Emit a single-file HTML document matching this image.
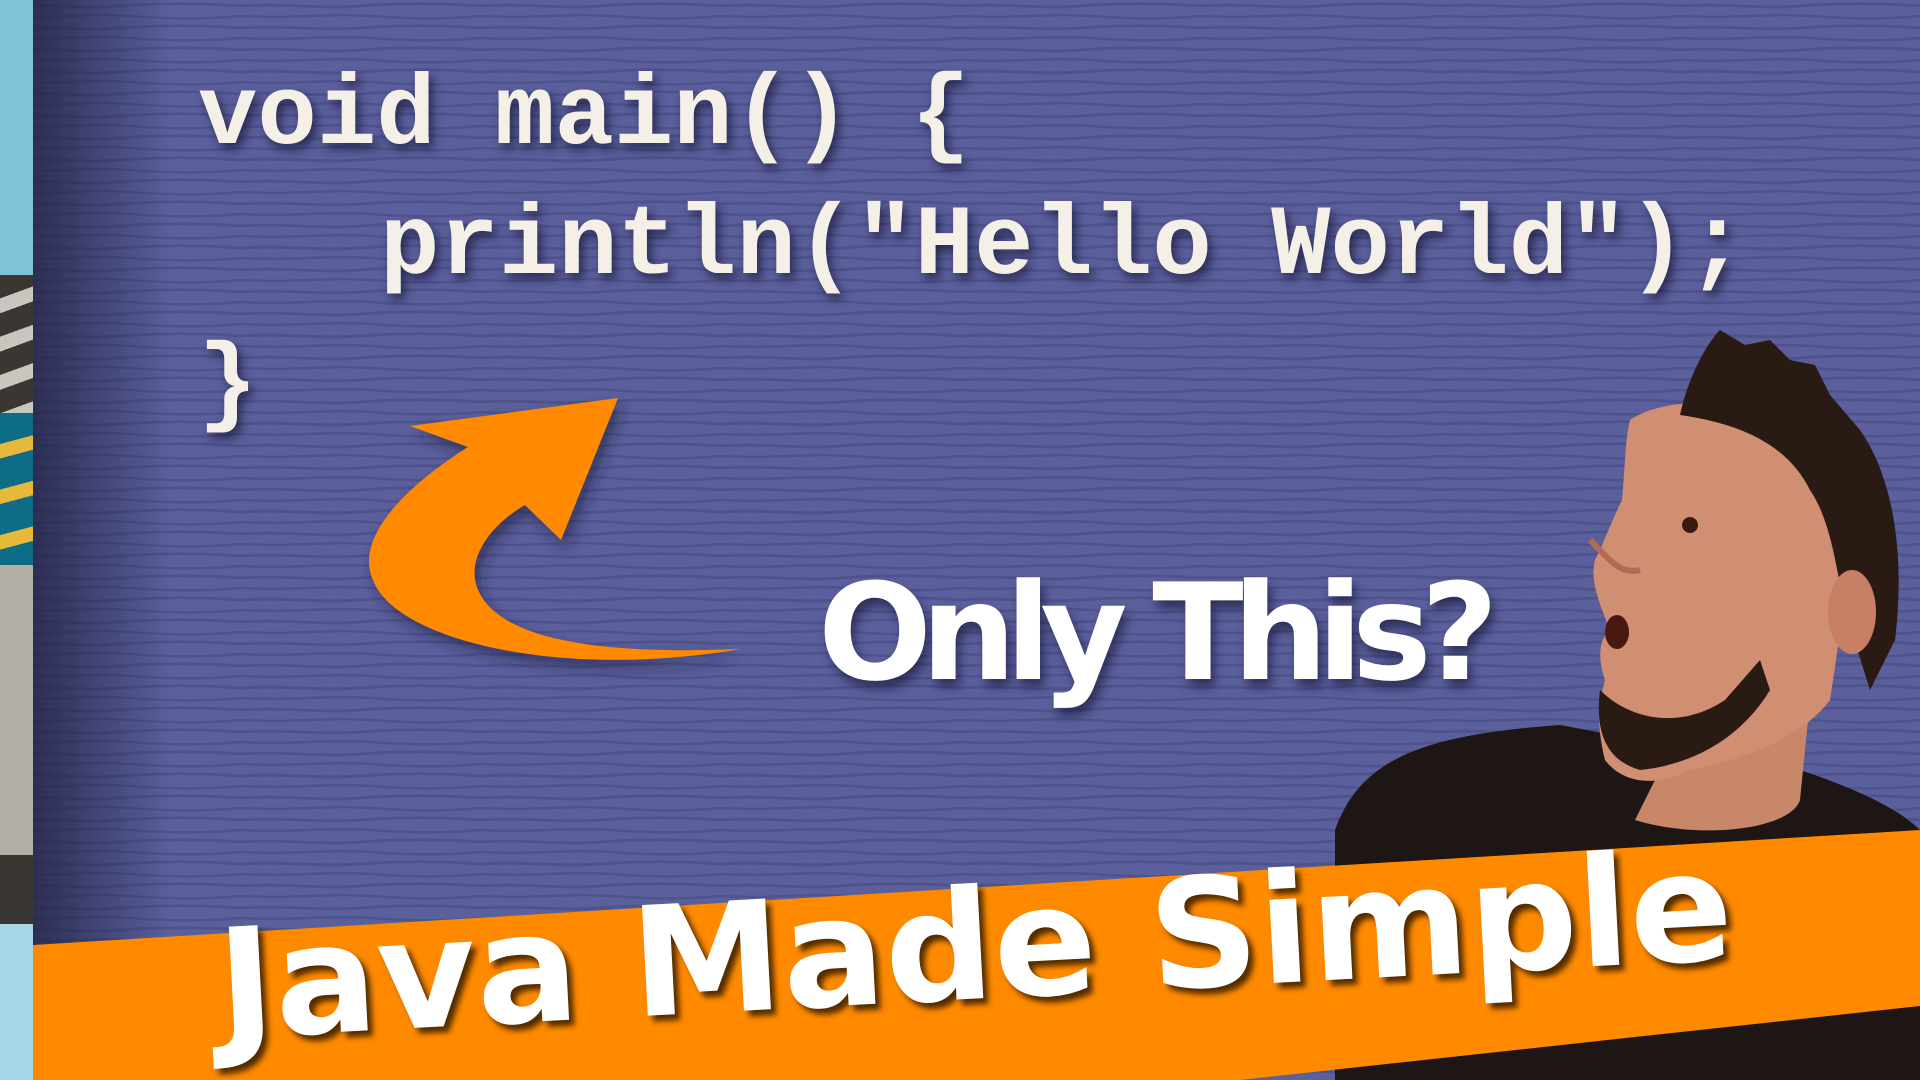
<!DOCTYPE html>
<html><head><meta charset="utf-8"><style>
html,body{margin:0;padding:0}
body{width:1920px;height:1080px;overflow:hidden;position:relative;background:#5b5f9c;font-family:"Liberation Sans",sans-serif}
.strip{position:absolute;left:0;top:0;width:33px;height:1080px}
.vig{position:absolute;left:33px;top:0;width:140px;height:1080px;background:linear-gradient(90deg,rgba(30,30,60,.75),rgba(30,30,60,0))}
.code{position:absolute;font-family:"Liberation Mono",monospace;font-weight:bold;font-size:99px;color:#f4efe7;white-space:pre;line-height:1;text-shadow:4px 6px 10px rgba(20,20,50,.7)}
.q{position:absolute;left:818px;top:566px;font-family:"DejaVu Sans",sans-serif;font-weight:bold;font-size:134px;color:#fff;white-space:nowrap;line-height:1;letter-spacing:-11px;text-shadow:4px 8px 10px rgba(20,20,50,.6)}
.jm{position:absolute;left:222px;top:910px;font-family:"DejaVu Sans",sans-serif;font-weight:bold;font-size:152px;color:#fff;white-space:nowrap;line-height:1;letter-spacing:0px;transform:rotate(-3deg);transform-origin:0 100%;text-shadow:5px 6px 6px rgba(40,20,0,.8)}
</style></head><body>
<svg width="1920" height="1080" style="position:absolute;left:0;top:0">
<defs>
<pattern id="w" width="240" height="22" patternUnits="userSpaceOnUse">
<path d="M0 6 C40 3 80 9 120 6 S200 3 240 6" stroke="#4b5088" stroke-width="3" fill="none"/>
<path d="M0 16 C50 19 90 13 130 16 S210 19 240 16" stroke="#4b5088" stroke-width="2.5" fill="none"/>
</pattern>
</defs>
<rect x="0" y="0" width="1920" height="1080" fill="url(#w)" opacity="0.8"/>
</svg>
<div class="strip">
<div style="position:absolute;top:0;height:275px;width:33px;background:#7fc3d6"></div>
<div style="position:absolute;top:275px;height:138px;width:33px;background:repeating-linear-gradient(160deg,#3a3632 0 22px,#c9c6c0 22px 36px)"></div>
<div style="position:absolute;top:413px;height:152px;width:33px;background:repeating-linear-gradient(165deg,#0f6c86 0 30px,#e6b93a 30px 44px)"></div>
<div style="position:absolute;top:565px;height:290px;width:33px;background:#b3aea6"></div>
<div style="position:absolute;top:855px;height:69px;width:33px;background:#3a3632"></div>
<div style="position:absolute;top:924px;height:156px;width:33px;background:#a6d6e6"></div>
</div>
<div class="vig"></div>
<div class="code" style="left:198px;top:68px">void main() {</div>
<div class="code" style="left:380px;top:198px">println("Hello World");</div>
<div class="code" style="left:198px;top:337px">}</div>
<svg width="1920" height="1080" style="position:absolute;left:0;top:0">
<defs><filter id="sh" x="-20%" y="-20%" width="140%" height="140%"><feDropShadow dx="5" dy="8" stdDeviation="7" flood-color="#1a1a3a" flood-opacity="0.6"/></filter></defs>
<path filter="url(#sh)" fill="#ff8a00" d="M618 398 L410 426 L468 447 C400 490 355 540 373 580 C395 640 560 680 741 649 C600 655 500 640 478 590 C465 560 490 525 525 505 L561 540 Z"/>
<path fill="#1e1614" d="M1335 1080 L1335 830 C1360 760 1420 735 1560 725 L1640 740 L1800 770 C1860 790 1900 810 1920 830 L1920 1080 Z"/>
<path fill="#c9876a" d="M1635 820 C1700 840 1790 830 1800 800 L1810 700 L1700 690 Z"/>
<path fill="#d08f72" d="M1630 420 C1660 400 1720 395 1770 420 C1810 440 1840 520 1845 600 L1830 700 C1800 740 1740 760 1690 770 C1650 790 1620 780 1605 760 C1595 720 1600 700 1605 680 C1598 660 1598 640 1610 630 C1598 600 1590 580 1595 560 C1605 540 1612 520 1622 500 C1625 470 1625 440 1630 420 Z"/>
<path fill="#2a1a14" d="M1680 415 C1690 370 1710 340 1720 330 L1745 345 L1770 340 L1790 360 L1815 365 L1830 395 L1860 430 C1895 480 1905 560 1895 640 L1870 690 L1845 610 C1835 560 1830 520 1810 490 C1790 450 1750 425 1680 415 Z"/>
<ellipse cx="1852" cy="612" rx="24" ry="42" fill="#c78066"/>
<path fill="#2a1a14" d="M1600 690 C1630 720 1680 730 1725 700 L1760 660 L1770 690 C1740 740 1690 765 1640 770 C1605 760 1595 730 1600 690 Z"/>
<ellipse cx="1617" cy="632" rx="12" ry="17" fill="#4a1812"/>
<path d="M1590 540 C1610 560 1620 575 1640 570" stroke="#b06a56" stroke-width="6" fill="none"/>
<circle cx="1690" cy="525" r="8" fill="#3a1a10"/>
<path fill="#ff8a00" d="M33 945 L1920 830 L1920 1006 L1240 1080 L33 1080 Z"/>
</svg>
<div class="q">Only This?</div>
<div class="jm">Java Made Simple</div>
</body></html>
